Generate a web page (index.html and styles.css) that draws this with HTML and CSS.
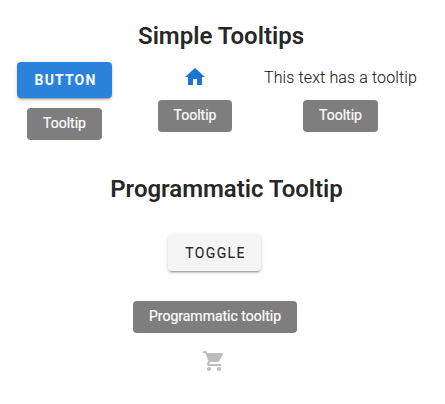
FILE: index.html
```html
<!DOCTYPE html>
<html lang="en">
<head>
<meta charset="utf-8">
<title>Tooltips</title>
<link rel="stylesheet" href="styles.css">
</head>
<body>
<main>
  <section class="simple">
    <h2>Simple Tooltips</h2>
    <div class="examples">
      <div class="example first"><button class="btn primary">Button</button><span class="tooltip">Tooltip</span></div>
      <div class="example second"><span class="trigger"><svg class="home" viewBox="0 0 24 24"><path d="M10 20V14H14V20H19V12H22L12 3L2 12H5V20H10Z"/></svg></span><span class="tooltip">Tooltip</span></div>
      <div class="example third"><span class="trigger">This text has a tooltip</span><span class="tooltip">Tooltip</span></div>
    </div>
  </section>
  <section class="programmatic">
    <h2>Programmatic Tooltip</h2>
    <button class="btn toggle">Toggle</button>
    <span class="tooltip wide">Programmatic tooltip</span>
    <svg class="cart" viewBox="0 0 24 24"><path d="M7 18c-1.1 0-1.99.9-1.99 2S5.900 22 7 22s2-.9 2-2-.9-2-2-2zM1 2v2h2l3.600 7.590-1.350 2.450c-.16.28-.25.61-.25.96 0 1.100.9 2 2 2h12v-2H7.420c-.14 0-.25-.11-.25-.25l.03-.12.9-1.630h7.450c.75 0 1.410-.41 1.750-1.030l3.580-6.490c.08-.14.12-.31.12-.48 0-.55-.45-1-1-1H5.210l-.94-2H1zm16 16c-1.100 0-1.990.9-1.990 2s.89 2 1.990 2 2-.9 2-2-.9-2-2-2z"/></svg>
  </section>
</main>
</body>
</html>
```
FILE: styles.css
```css
* { box-sizing: border-box; }
body { margin: 0; background: #fff; color: rgba(0,0,0,.87); font-family: Roboto, sans-serif; }
main { width: 445px; height: 404px; overflow: hidden; padding-top: 18px; }
h2 { margin: 0; font-size: 24px; line-height: 36px; font-weight: 600; letter-spacing: -.02px; text-align: center; white-space: nowrap; }
.simple { height: 153px; }
.simple h2 { padding-right: 3px; }
.examples { display: flex; margin-top: 8px; padding-left: 17px; }
.example { display: flex; flex-direction: column; align-items: center; }
.second { margin-left: 46px; }
.second .tooltip { width: 74px; }
.second .home { margin-right: 1px; }
.third { margin-left: 32px; }
.trigger { height: 30px; margin-bottom: 8px; display: flex; align-items: center; font-size: 16px; font-weight: 300; letter-spacing: .12px; white-space: nowrap; -webkit-text-stroke: .15px currentColor; }
.btn { height: 36px; border: 0; border-radius: 4px; padding: 0; font: 500 14px/36px Roboto, sans-serif; letter-spacing: 1.25px; text-transform: uppercase; box-shadow: 0 3px 1px -2px rgba(0,0,0,.2), 0 2px 2px rgba(0,0,0,.14), 0 1px 5px rgba(0,0,0,.12); }
.primary { width: 95px; background: #2a82da; color: #fff; margin-bottom: 10px; font-weight: 700; letter-spacing: 1.15px; padding-left: 2px; }
.tooltip { width: 75px; height: 32px; border-radius: 4px; background: #7e7e7e; color: #fff; font-size: 14px; line-height: 31px; text-align: center; -webkit-text-stroke: .2px #fff; }
svg { width: 24px; height: 24px; }
.home { fill: #1976d2; }
.programmatic { display: flex; flex-direction: column; align-items: center; }
.programmatic h2 { padding-left: 8px; }
.toggle { width: 93px; background: #f5f5f5; color: rgba(0,0,0,.87); margin: 28px 16px 30px 0; padding-left: 2px; font-weight: 400; letter-spacing: 1.35px; -webkit-text-stroke: .15px currentColor; }
.wide { width: 164px; margin-right: 15px; }
.cart { margin: 16px 17px 0 0; fill: #bdbdbd; }
```
